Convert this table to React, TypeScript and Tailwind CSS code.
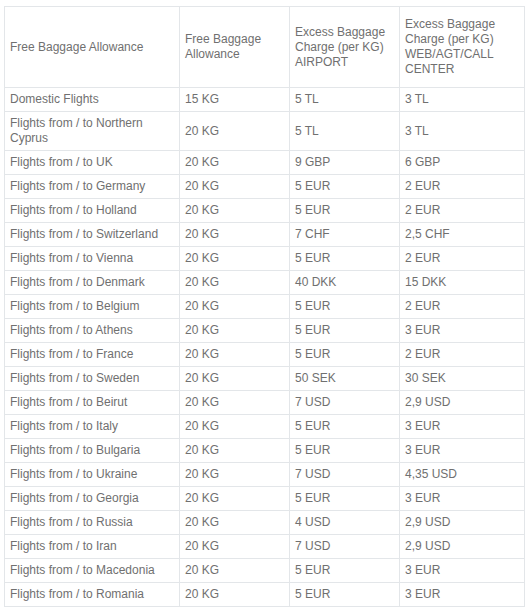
const rows: [string, string, string, string][] = [
  ['Domestic Flights', '15 KG', '5 TL', '3 TL'],
  ['Flights from / to Northern Cyprus', '20 KG', '5 TL', '3 TL'],
  ['Flights from / to UK', '20 KG', '9 GBP', '6 GBP'],
  ['Flights from / to Germany', '20 KG', '5 EUR', '2 EUR'],
  ['Flights from / to Holland', '20 KG', '5 EUR', '2 EUR'],
  ['Flights from / to Switzerland', '20 KG', '7 CHF', '2,5 CHF'],
  ['Flights from / to Vienna', '20 KG', '5 EUR', '2 EUR'],
  ['Flights from / to Denmark', '20 KG', '40 DKK', '15 DKK'],
  ['Flights from / to Belgium', '20 KG', '5 EUR', '2 EUR'],
  ['Flights from / to Athens', '20 KG', '5 EUR', '3 EUR'],
  ['Flights from / to France', '20 KG', '5 EUR', '2 EUR'],
  ['Flights from / to Sweden', '20 KG', '50 SEK', '30 SEK'],
  ['Flights from / to Beirut', '20 KG', '7 USD', '2,9 USD'],
  ['Flights from / to Italy', '20 KG', '5 EUR', '3 EUR'],
  ['Flights from / to Bulgaria', '20 KG', '5 EUR', '3 EUR'],
  ['Flights from / to Ukraine', '20 KG', '7 USD', '4,35 USD'],
  ['Flights from / to Georgia', '20 KG', '5 EUR', '3 EUR'],
  ['Flights from / to Russia', '20 KG', '4 USD', '2,9 USD'],
  ['Flights from / to Iran', '20 KG', '7 USD', '2,9 USD'],
  ['Flights from / to Macedonia', '20 KG', '5 EUR', '3 EUR'],
  ['Flights from / to Romania', '20 KG', '5 EUR', '3 EUR'],
];

const cell = 'border border-[#e3e6e9] px-[5px] py-[4px] align-middle text-left font-normal';

export default function App() {
  return (
    <div className="bg-white pt-[6px] pl-[4px]" style={{ fontFamily: '"Liberation Sans", Arial, sans-serif' }}>
      <table className="w-[520px] table-fixed border-collapse text-[12px] leading-[15px] text-[#707070]">
        <colgroup>
          <col className="w-[175px]" />
          <col className="w-[110px]" />
          <col className="w-[110px]" />
          <col className="w-[125px]" />
        </colgroup>
        <thead>
          <tr className="h-[81px]">
            <th className={cell}>Free Baggage Allowance</th>
            <th className={cell}>Free Baggage Allowance</th>
            <th className={cell}>Excess Baggage Charge (per KG) AIRPORT</th>
            <th className={cell}>Excess Baggage Charge (per KG) WEB/AGT/CALL CENTER</th>
          </tr>
        </thead>
        <tbody>
          {rows.map((r, i) => (
            <tr key={i} className="h-[24px]">
              {r.map((c, j) => (
                <td key={j} className={cell}>{c}</td>
              ))}
            </tr>
          ))}
        </tbody>
      </table>
    </div>
  );
}
